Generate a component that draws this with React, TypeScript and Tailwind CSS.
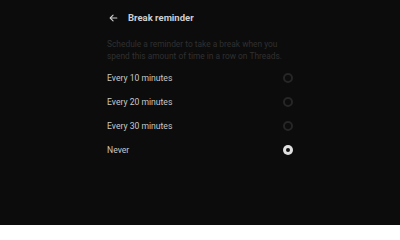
import React from "react";

const options = [
  { label: "Every 10 minutes", selected: false },
  { label: "Every 20 minutes", selected: false },
  { label: "Every 30 minutes", selected: false },
  { label: "Never", selected: true },
];

export default function App() {
  return (
    <div
      className="w-[400px] h-[225px] bg-[#0c0c0c] overflow-hidden"
      style={{ fontFamily: "Roboto, 'Noto Sans', sans-serif" }}
    >
      <div className="ml-[107px] w-[188px] flex flex-col">
        <div className="h-[35px] pt-[1px] flex items-center">
          <svg width="11" height="10" viewBox="0 0 24 24" className="ml-[1px]" fill="none" stroke="#d0d0d0" strokeWidth="2.6" strokeLinecap="round" strokeLinejoin="round">
            <path d="M20 12H5" />
            <path d="M11 5l-7 7 7 7" />
          </svg>
          <span className="ml-[9px] text-[9.5px] font-bold text-[#cfcfcf] leading-none">Break reminder</span>
        </div>
        <p className="mt-[3px] text-[8.4px] leading-[12px] text-[#303030]">
          Schedule a reminder to take a break when you spend this amount of time in a row on Threads.
        </p>
        <div className="mt-[4px] flex flex-col">
          {options.map((o) => (
            <div key={o.label} className="h-[24px] flex items-center justify-between">
              <span className="text-[8.6px] text-[#c8c8c8] leading-none">{o.label}</span>
              {o.selected ? (
                <div className="w-[10px] h-[10px] rounded-full bg-[#e0e0e0] flex items-center justify-center mr-[2px]">
                  <div className="w-[4px] h-[4px] rounded-full bg-[#111]" />
                </div>
              ) : (
                <div className="w-[10px] h-[10px] rounded-full border-[2px] border-[#262626] mr-[2px]" />
              )}
            </div>
          ))}
        </div>
      </div>
    </div>
  );
}
